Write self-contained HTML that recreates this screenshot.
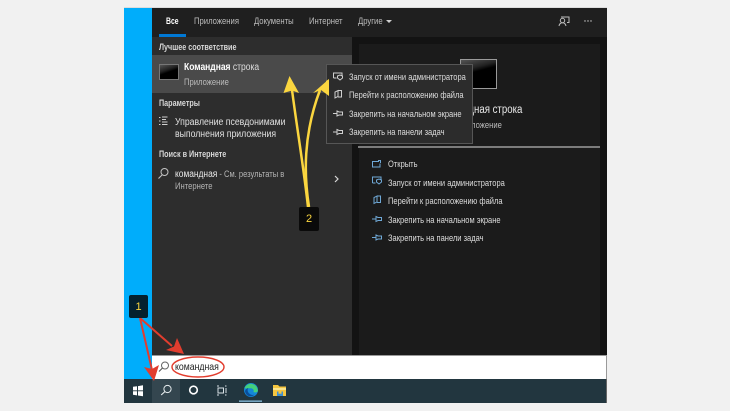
<!DOCTYPE html>
<html lang="ru">
<head>
<meta charset="utf-8">
<style>
html,body{margin:0;padding:0;background:#f1f1f1;}
body{width:730px;height:411px;position:relative;overflow:hidden;font-family:"Liberation Sans","DejaVu Sans",sans-serif;}
.a{position:absolute;}
.t{position:absolute;white-space:nowrap;line-height:12px;transform-origin:left center;}
.m{font-size:9px;color:#dcdcdc;transform:scaleX(.836);}
.h{font-size:9px;font-weight:bold;color:#d8d8d8;transform:scaleX(.8);}
.tab{font-size:9.500px;color:#bcbcbc;top:16px;transform:scaleX(.81);}
svg{position:absolute;overflow:visible;}
</style>
</head>
<body>
<div class="a" style="left:124px;top:7px;width:483px;height:1px;background:#ddd"></div>
<div class="a" style="left:124px;top:8px;width:28px;height:372px;background:#00adfb"></div>
<div class="a" style="left:152px;top:8px;width:455px;height:29px;background:#1f1f1f"></div>
<div class="a" style="left:152px;top:37px;width:200px;height:319px;background:#2d2d2d"></div>
<div class="a" style="left:152px;top:55px;width:200px;height:38px;background:#4a4a4a"></div>
<div class="a" style="left:352px;top:37px;width:255px;height:319px;background:#131313"></div>
<div class="a" style="left:359px;top:44px;width:241px;height:312px;background:#1b1b1b"></div>

<!-- tabs -->
<div class="t" style="left:166px;top:16px;font-size:9.500px;font-weight:bold;color:#fff;transform:scaleX(.72)">Все</div>
<div class="a" style="left:159px;top:34px;width:27px;height:2.500px;background:#0078d4"></div>
<div class="t tab" style="left:194px">Приложения</div>
<div class="t tab" style="left:254px">Документы</div>
<div class="t tab" style="left:309px">Интернет</div>
<div class="t tab" style="left:358px">Другие</div>
<svg style="left:0;top:0" width="730" height="411">
<path d="M386 20h6l-3 3z" fill="#d0d0d0"/>
<path d="M561 17h8v5.500h-2M559 26c.4-2.200 1.800-3.300 3.500-3.300s3 1.100 3.500 3.300" fill="none" stroke="#bdbdbd" stroke-width="1"/>
<circle cx="562.500" cy="20.500" r="2.200" fill="#1f1f1f" stroke="#bdbdbd" stroke-width="1"/>
<circle cx="585" cy="21" r=".7" fill="#d0d0d0"/><circle cx="588" cy="21" r=".7" fill="#d0d0d0"/><circle cx="591" cy="21" r=".7" fill="#d0d0d0"/>
</svg>

<!-- left list -->
<div class="t h" style="left:159px;top:41px">Лучшее соответствие</div>
<div class="a" style="left:159px;top:64px;width:18px;height:14px;background:linear-gradient(160deg,#555 0%,#222 35%,#000 50%);border:1px solid #777"></div>
<div class="t" style="left:184px;top:62px;font-size:10px;color:#ddd;transform:scaleX(.85)"><b style="color:#fff">Командная</b> строка</div>
<div class="t" style="left:184px;top:76px;font-size:9px;color:#bbb;transform:scaleX(.85)">Приложение</div>
<div class="t h" style="left:159px;top:97px">Параметры</div>
<div class="t" style="left:175px;top:117px;font-size:10px;color:#e0e0e0;transform:scaleX(.87)">Управление псевдонимами</div>
<div class="t" style="left:175px;top:129px;font-size:10px;color:#e0e0e0;transform:scaleX(.87)">выполнения приложения</div>
<div class="t h" style="left:159px;top:148px">Поиск в Интернете</div>
<div class="t" style="left:175px;top:168px;font-size:10px;color:#e8e8e8;transform:scaleX(.84)">командная<span style="font-size:9px;color:#b4b4b4"> - См. результаты в</span></div>
<div class="t" style="left:175px;top:180px;font-size:9px;color:#b4b4b4;transform:scaleX(.85)">Интернете</div>
<svg style="left:0;top:0" width="730" height="411">
<path d="M159 117.500h1.500M159 121h1.500M159 124.500h1.500M162 117h5.500M162 119.500h4M162 122h5.500M162 124.500h5.500" stroke="#d0d0d0" stroke-width="1" fill="none"/>
<circle cx="164.500" cy="172" r="3.500" fill="none" stroke="#c4c4c4" stroke-width="1"/>
<path d="M162 175l-3.500 3.500" stroke="#c4c4c4" stroke-width="1.100"/>
<path d="M335 176l3 3-3 3" stroke="#d8d8d8" stroke-width="1.200" fill="none"/>
</svg>

<!-- right pane -->
<div class="a" style="left:460px;top:59px;width:37px;height:30px;background:linear-gradient(165deg,#555 0%,#222 30%,#000 42%);border:1px solid #9a9a9a;box-sizing:border-box"></div>
<div class="t" style="left:440px;top:104px;font-size:11.500px;color:#e8e8e8;transform:scaleX(.84)">Командная строка</div>
<div class="t" style="left:457px;top:119px;font-size:9px;color:#bbb;transform:scaleX(.85)">Приложение</div>
<div class="a" style="left:358px;top:146px;width:242px;height:1.500px;background:#7c7c7c"></div>

<div class="t m" style="left:388px;top:158px">Открыть</div>
<div class="t m" style="left:388px;top:177px">Запуск от имени администратора</div>
<div class="t m" style="left:388px;top:195px">Перейти к расположению файла</div>
<div class="t m" style="left:388px;top:214px">Закрепить на начальном экране</div>
<div class="t m" style="left:388px;top:232px">Закрепить на панели задач</div>
<svg style="left:0;top:0" width="730" height="411" fill="none" stroke="#6fa8d6" stroke-width="1">
<path d="M379 161.500h-6.500v5.500h7.500v-3.500M378 160.500h2.500v2.500"/>
<path d="M372.500 183v-6h8.500v2.500M372.500 183h3"/><path d="M376.500 180l2.500-1 2.500 1v2l-2.500 2-2.500-2z"/>
<path d="M374 197.500v6l3-1.500v-6l-3 1.500zM377 196h3.500v6.500H377"/>
<path d="M372 219h4M376 216.500l2 1h3.500v3H378l-2 1z"/>
<path d="M372 237.500h4M376 235l2 1h3.500v3H378l-2 1z"/>
</svg>

<!-- yellow arrows (under the context menu) -->
<svg style="left:0;top:0" width="730" height="411">
<path d="M308 207C304 170 298 135 292 90" fill="none" stroke="#fbd63f" stroke-width="2.500"/>
<path d="M309 207C304 175 303 135 320 90" fill="none" stroke="#fbd63f" stroke-width="2.500"/>
<path d="M289.500 76l9.500 17-7-2.500-8.500 2.500z" fill="#fbd63f"/>
<path d="M329 79l0 17-8-6-8 3z" fill="#fbd63f"/>
</svg>

<!-- context menu -->
<div class="a" style="left:326px;top:64px;width:147px;height:80px;background:#2c2c2c;border:1px solid #565656;box-sizing:border-box"></div>
<svg style="left:0;top:0" width="730" height="411"><path d="M329 79l0 17-3-2.300V81z" fill="#fbd63f"/></svg>
<div class="t m" style="left:349px;top:71px">Запуск от имени администратора</div>
<div class="t m" style="left:349px;top:89px">Перейти к расположению файла</div>
<div class="t m" style="left:349px;top:108px">Закрепить на начальном экране</div>
<div class="t m" style="left:349px;top:126px">Закрепить на панели задач</div>
<svg style="left:0;top:0" width="730" height="411" fill="none" stroke="#cfcfcf" stroke-width="1">
<path d="M333.500 78v-5h8.500v2.500M333.500 78h3"/><path d="M337.500 76l2.500-1 2.500 1v2l-2.500 2-2.500-2z"/>
<path d="M335 92v6l3-1.500v-6l-3 1.500zM338 90.500h3.500V97H338"/>
<path d="M333 113.500h4M337 111l2 1h3.500v3H339l-2 1z"/>
<path d="M333 132h4M337 129.500l2 1h3.500v3H339l-2 1z"/>
</svg>

<!-- search box -->
<div class="a" style="left:152px;top:355px;width:455px;height:25px;background:#fff;border:1px solid #9a9a9a;border-left:none;box-sizing:border-box"></div>
<div class="t" style="left:175px;top:361px;font-size:10.500px;color:#222;transform:scaleX(.83)">командная</div>
<svg style="left:0;top:0" width="730" height="411">
<circle cx="165" cy="365.500" r="3.500" fill="none" stroke="#666" stroke-width="1"/>
<path d="M162.500 368l-3.500 3.500" stroke="#555" stroke-width="1.100"/>
<ellipse cx="198" cy="367" rx="26" ry="10" fill="none" stroke="#e23d2e" stroke-width="1.400"/>
</svg>

<!-- taskbar -->
<div class="a" style="left:124px;top:379px;width:483px;height:24px;background:#22363f;border-right:1px solid #666;box-sizing:border-box"></div>
<div class="a" style="left:152px;top:379px;width:28px;height:24px;background:#34464f"></div>
<svg style="left:0;top:0" width="730" height="411">
<path d="M133 386.800l4-.6v4.200h-4zM138 386.100l5-.8v5.100h-5zM133 391.200h4v4.200l-4-.6zM138 391.200h5v5.100l-5-.8z" fill="#fff"/>
<circle cx="167.500" cy="389" r="3.600" fill="none" stroke="#e8eef0" stroke-width="1"/>
<path d="M165 391.500l-3.800 3.500" stroke="#e8eef0" stroke-width="1.100"/>
<circle cx="193.500" cy="390" r="3.800" fill="none" stroke="#fff" stroke-width="1.600"/>
<path d="M217 386h2M217 395h2M225 386h1.500M225 395h1.500M226 388v5" stroke="#d8e0e4" stroke-width="1" fill="none"/>
<rect x="218" y="388" width="5.500" height="5" fill="none" stroke="#d8e0e4" stroke-width="1"/>
<circle cx="251" cy="390" r="7" fill="#1487d8"/>
<path d="M244.500 388a7 7 0 0 1 13.400 2.500c0 2-2.800 2.300-4.400 1.500 .8-2-.6-3.800-3-3.800-2.500 0-4.500 .8-6-.2z" fill="#43d07c"/>
<path d="M245 391c.5-1.800 2-2.800 3.500-3-1.500 1.500-1 4 1 5.800 1.500 1.200 3.300 1.500 5 .7-2 2.200-5.500 2.300-7.500.5-1.300-1.200-1.800-2.700-2-4z" fill="#0a4f9c"/>
<rect x="239" y="400.500" width="23" height="1.300" fill="#8ac0e0"/>
<path d="M273 385h5l1.500 1.500h6.500v9.500h-13z" fill="#f5c640"/>
<rect x="273" y="388" width="13" height="2" fill="#fbe58e"/>
<rect x="277" y="391.500" width="6" height="4.500" fill="#3f8fd0"/>
<rect x="278.500" y="391.500" width="3" height="2.200" fill="#f5c640"/>
</svg>

<!-- red arrows -->
<svg style="left:0;top:0" width="730" height="411">
<path d="M140 318l32 28" stroke="#e23d2e" stroke-width="2" fill="none"/>
<path d="M140 318l12 52" stroke="#e23d2e" stroke-width="2" fill="none"/>
<path d="M184 354L166 350 174 346.500 177 338z" fill="#e23d2e"/>
<path d="M154 381L144 367 152 369 159 365z" fill="#e23d2e"/>
</svg>
<div class="a" style="left:299px;top:207px;width:20px;height:24px;background:#0a0a0a;border-radius:2px"></div>
<div class="t" style="left:299px;top:213px;width:20px;text-align:center;font-size:11px;color:#fbd63f">2</div>
<div class="a" style="left:129px;top:295px;width:19px;height:23px;background:#04202e;border-radius:2px"></div>
<div class="t" style="left:129px;top:301px;width:19px;text-align:center;font-size:11px;color:#fbd63f">1</div>
</body>
</html>
